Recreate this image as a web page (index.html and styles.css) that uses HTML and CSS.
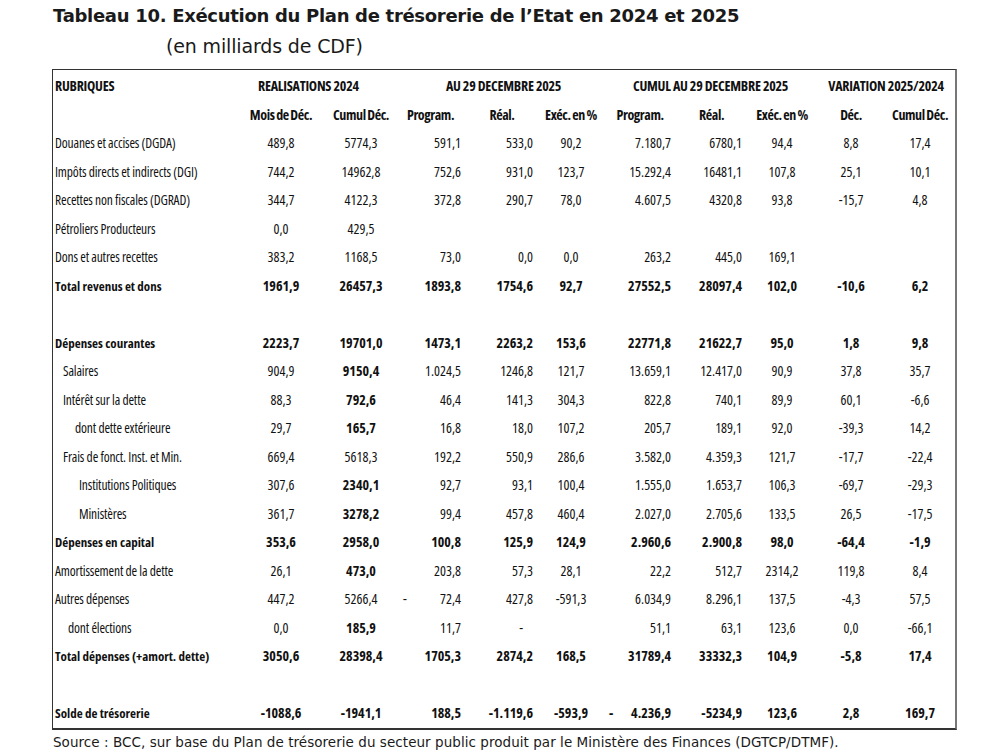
FILE: index.html
```html
<!DOCTYPE html>
<html lang="fr">
<head>
<meta charset="utf-8">
<title>Tableau 10</title>
<link rel="stylesheet" href="styles.css">
</head>
<body>
<div class="page">
  <h1 class="title">Tableau 10. Exécution du Plan de trésorerie de l’Etat en 2024 et 2025</h1>
  <div class="subtitle">(en milliards de CDF)</div>
  <div class="box">
    <table class="tbl">
      <colgroup>
        <col class="c0"><col class="c1"><col class="c2"><col class="c3"><col class="c4"><col class="c5"><col class="c6"><col class="c7"><col class="c8"><col class="c9"><col class="c10">
      </colgroup>
      <thead>
        <tr class="b h1">
          <td class="lab">RUBRIQUES</td>
          <td colspan="2" class="grp-real">REALISATIONS 2024</td>
          <td colspan="3" class="ctr">AU 29 DECEMBRE 2025</td>
          <td colspan="3" class="ctr">CUMUL AU 29 DECEMBRE 2025</td>
          <td colspan="2" class="ctr">VARIATION 2025/2024</td>
        </tr>
        <tr class="b h2">
          <td></td>
          <td class="ctr">Mois de Déc.</td>
          <td class="ctr">Cumul Déc.</td>
          <td class="ctr hp">Program.</td>
          <td class="ctr">Réal.</td>
          <td class="ctr">Exéc. en %</td>
          <td class="ctr">Program.</td>
          <td class="ctr">Réal.</td>
          <td class="ctr">Exéc. en %</td>
          <td class="ctr">Déc.</td>
          <td class="ctr">Cumul Déc.</td>
        </tr>
      </thead>
      <tbody>
        <tr><td class="lab">Douanes et accises (DGDA)</td><td>489,8</td><td>5774,3</td><td class="r">591,1</td><td class="r">533,0</td><td>90,2</td><td class="r">7.180,7</td><td class="r">6780,1</td><td>94,4</td><td>8,8</td><td>17,4</td></tr>
        <tr><td class="lab">Impôts directs et indirects (DGI)</td><td>744,2</td><td>14962,8</td><td class="r">752,6</td><td class="r">931,0</td><td>123,7</td><td class="r">15.292,4</td><td class="r">16481,1</td><td>107,8</td><td>25,1</td><td>10,1</td></tr>
        <tr><td class="lab">Recettes non fiscales (DGRAD)</td><td>344,7</td><td>4122,3</td><td class="r">372,8</td><td class="r">290,7</td><td>78,0</td><td class="r">4.607,5</td><td class="r">4320,8</td><td>93,8</td><td>-15,7</td><td>4,8</td></tr>
        <tr><td class="lab">Pétroliers Producteurs</td><td>0,0</td><td>429,5</td><td class="r"></td><td class="r"></td><td></td><td class="r"></td><td class="r"></td><td></td><td></td><td></td></tr>
        <tr><td class="lab">Dons et autres recettes</td><td>383,2</td><td>1168,5</td><td class="r">73,0</td><td class="r">0,0</td><td>0,0</td><td class="r">263,2</td><td class="r">445,0</td><td>169,1</td><td></td><td></td></tr>
        <tr class="b"><td class="lab">Total revenus et dons</td><td>1961,9</td><td>26457,3</td><td class="r">1893,8</td><td class="r">1754,6</td><td>92,7</td><td class="r">27552,5</td><td class="r">28097,4</td><td>102,0</td><td>-10,6</td><td>6,2</td></tr>
        <tr class="blank"><td colspan="11"></td></tr>
        <tr class="b"><td class="lab">Dépenses courantes</td><td>2223,7</td><td>19701,0</td><td class="r">1473,1</td><td class="r">2263,2</td><td>153,6</td><td class="r">22771,8</td><td class="r">21622,7</td><td>95,0</td><td>1,8</td><td>9,8</td></tr>
        <tr><td class="lab i1">Salaires</td><td>904,9</td><td class="bb">9150,4</td><td class="r">1.024,5</td><td class="r">1246,8</td><td>121,7</td><td class="r">13.659,1</td><td class="r">12.417,0</td><td>90,9</td><td>37,8</td><td>35,7</td></tr>
        <tr><td class="lab i1">Intérêt sur la dette</td><td>88,3</td><td class="bb">792,6</td><td class="r">46,4</td><td class="r">141,3</td><td>304,3</td><td class="r">822,8</td><td class="r">740,1</td><td>89,9</td><td>60,1</td><td>-6,6</td></tr>
        <tr><td class="lab i2">dont dette extérieure</td><td>29,7</td><td class="bb">165,7</td><td class="r">16,8</td><td class="r">18,0</td><td>107,2</td><td class="r">205,7</td><td class="r">189,1</td><td>92,0</td><td>-39,3</td><td>14,2</td></tr>
        <tr><td class="lab i1">Frais de fonct. Inst. et Min.</td><td>669,4</td><td>5618,3</td><td class="r">192,2</td><td class="r">550,9</td><td>286,6</td><td class="r">3.582,0</td><td class="r">4.359,3</td><td>121,7</td><td>-17,7</td><td>-22,4</td></tr>
        <tr><td class="lab i3">Institutions Politiques</td><td>307,6</td><td class="bb">2340,1</td><td class="r">92,7</td><td class="r">93,1</td><td>100,4</td><td class="r">1.555,0</td><td class="r">1.653,7</td><td>106,3</td><td>-69,7</td><td>-29,3</td></tr>
        <tr><td class="lab i3">Ministères</td><td>361,7</td><td class="bb">3278,2</td><td class="r">99,4</td><td class="r">457,8</td><td>460,4</td><td class="r">2.027,0</td><td class="r">2.705,6</td><td>133,5</td><td>26,5</td><td>-17,5</td></tr>
        <tr class="b"><td class="lab">Dépenses en capital</td><td>353,6</td><td>2958,0</td><td class="r">100,8</td><td class="r">125,9</td><td>124,9</td><td class="r">2.960,6</td><td class="r">2.900,8</td><td>98,0</td><td>-64,4</td><td>-1,9</td></tr>
        <tr><td class="lab">Amortissement de la dette</td><td>26,1</td><td class="bb">473,0</td><td class="r">203,8</td><td class="r">57,3</td><td>28,1</td><td class="r">22,2</td><td class="r">512,7</td><td>2314,2</td><td>119,8</td><td>8,4</td></tr>
        <tr><td class="lab">Autres dépenses</td><td>447,2</td><td>5266,4</td><td class="r"><span class="dash">-</span>72,4</td><td class="r">427,8</td><td>-591,3</td><td class="r">6.034,9</td><td class="r">8.296,1</td><td>137,5</td><td>-4,3</td><td>57,5</td></tr>
        <tr><td class="lab i4">dont élections</td><td>0,0</td><td class="bb">185,9</td><td class="r">11,7</td><td class="r dash-cell">-</td><td></td><td class="r">51,1</td><td class="r">63,1</td><td>123,6</td><td>0,0</td><td>-66,1</td></tr>
        <tr class="b"><td class="lab">Total dépenses (+amort. dette)</td><td>3050,6</td><td>28398,4</td><td class="r">1705,3</td><td class="r">2874,2</td><td>168,5</td><td class="r">31789,4</td><td class="r">33332,3</td><td>104,9</td><td>-5,8</td><td>17,4</td></tr>
        <tr class="blank"><td colspan="11"></td></tr>
        <tr class="b"><td class="lab">Solde de trésorerie</td><td>-1088,6</td><td>-1941,1</td><td class="r">188,5</td><td class="r">-1.119,6</td><td>-593,9</td><td class="r"><span class="dash dash2">-</span>4.236,9</td><td class="r">-5234,9</td><td>123,6</td><td>2,8</td><td>169,7</td></tr>
      </tbody>
    </table>
  </div>
  <p class="source">Source : BCC, sur base du Plan de trésorerie du secteur public produit par le Ministère des Finances (DGTCP/DTMF).</p>
</div>
</body>
</html>
```

FILE: styles.css
```css
html, body {
  margin: 0;
  padding: 0;
  background: #ffffff;
}

.page {
  padding: 4px 0 0 52px;
  color: #1a1a1a;
}

.title {
  margin: 0;
  font-family: "DejaVu Sans", sans-serif;
  font-weight: bold;
  font-size: 18px;
  line-height: 24px;
  letter-spacing: -0.3px;
  padding-left: 1px;
}

.subtitle {
  margin: 6px 0 0 0;
  padding-left: 114px;
  font-family: "DejaVu Sans", sans-serif;
  font-size: 19px;
  line-height: 24px;
  letter-spacing: -0.15px;
}

.box {
  margin-top: 11px;
  width: 902px;
  border-left: 1px solid #333;
  border-top: 1px solid #333;
  border-right: 2px solid #777;
  border-bottom: 2px solid #333;
  padding-top: 2px;
}

.tbl {
  border-collapse: collapse;
  table-layout: fixed;
  width: 902px;
  font-family: "Open Sans", "Noto Sans", sans-serif;
  font-stretch: 75%;
  font-size: 14px;
  font-weight: 500;
  color: #111111;
}

.c0 { width: 190px; }
.c1 { width: 76px; }
.c2 { width: 84px; }
.c3 { width: 63px; }
.c4 { width: 72px; }
.c5 { width: 66px; }
.c6 { width: 72px; }
.c7 { width: 71px; }
.c8 { width: 70px; }
.c9 { width: 68px; }
.c10 { width: 70px; }

.tbl td {
  height: 28.5px;
  padding: 0;
  text-align: center;
  vertical-align: middle;
  white-space: nowrap;
  line-height: 16px;
}

.tbl td.r {
  text-align: right;
  padding-right: 5px;
}

.tbl td.ctr {
  text-align: center;
  padding-right: 0;
}

.tbl td.hp {
  padding-right: 8px;
}

.tbl td.lab {
  text-align: left;
  padding-left: 2px;
  font-size: 13.5px;
  letter-spacing: -0.15px;
}

.tbl tr.b td.lab {
  font-size: 13px;
  letter-spacing: 0;
}

.tbl tr.h1 td,
.tbl tr.h1 td.lab {
  font-size: 14px;
  letter-spacing: -0.25px;
}

.tbl tr.h2 td {
  letter-spacing: -0.4px;
  word-spacing: -0.5px;
}

.tbl td.i1 { padding-left: 10px; }
.tbl td.i2 { padding-left: 22px; }
.tbl td.i3 { padding-left: 26px; }
.tbl td.i4 { padding-left: 15px; }

.tbl td.grp-real {
  text-align: left;
  padding-left: 15px;
}

.tbl tr.b td,
.tbl td.bb {
  font-weight: 700;
}

.tbl tr.blank td {
  height: 28.5px;
}

.dash {
  float: left;
  padding-left: 0;
}

.dash2 {
  padding-left: 5px;
}

.tbl td.dash-cell {
  padding-right: 15px;
}

.source {
  margin: 4px 0 0 1px;
  font-family: "DejaVu Sans", sans-serif;
  font-size: 13.5px;
  line-height: 16px;
  letter-spacing: 0.05px;
}
```
